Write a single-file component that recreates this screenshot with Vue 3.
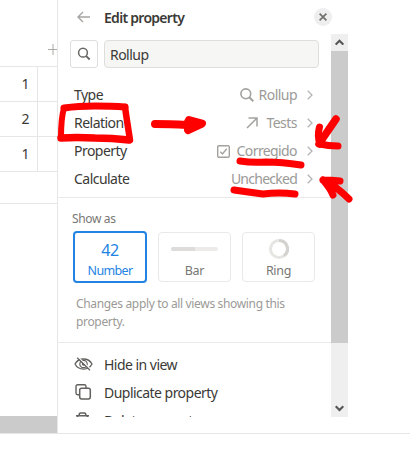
<script setup>
const cells = ['1', '2', '1']
const options = [
  { label: 'Type', value: 'Rollup', icon: 'search', cls: 'v-rollup' },
  { label: 'Relation', value: 'Tests', icon: 'arrow', cls: 'v-tests' },
  { label: 'Property', value: 'Corregido', icon: 'check', cls: 'v-corr' },
  { label: 'Calculate', value: 'Unchecked', icon: '', cls: 'v-unch' },
]
</script>

<template>
  <div class="page">
    <div class="main">
      <div class="table">
        <div class="thead">
          <svg width="9" height="11" viewBox="0 0 9 11"><path d="M0 5.5H9M5 0V11" stroke="#aaa9a6" stroke-width="1" fill="none" /></svg>
        </div>
        <div v-for="(c, i) in cells" :key="i" class="trow"><span class="cell">{{ c }}</span></div>
        <div class="tfoot"></div>
        <div class="hscroll"></div>
      </div>
      <div class="panel">
        <header class="head">
          <svg class="back" width="13" height="12" viewBox="0 0 13 12"><path d="M13 6H1M6 1L1 6L6 11" stroke="#a6a5a2" stroke-width="1.4" fill="none" /></svg>
          <span class="title">Edit property</span>
          <span class="close"><svg width="8" height="8" viewBox="0 0 8 8"><path d="M.6 .6L7.4 7.4M7.4 .6L.6 7.4" stroke="#71706d" stroke-width="1.7" /></svg></span>
        </header>
        <div class="body">
          <div class="content">
            <div class="namebar">
              <span class="iconbtn"><svg width="14" height="14" viewBox="0 0 14 14"><circle cx="6" cy="5.7" r="4.4" fill="none" stroke="#686763" stroke-width="1.5" /><path d="M9 8.9L12.7 12.5" stroke="#686763" stroke-width="1.9" /></svg></span>
              <span class="field">Rollup</span>
            </div>
            <div class="options">
              <div v-for="o in options" :key="o.label" class="opt">
                <span class="lab">{{ o.label }}</span>
                <svg v-if="o.icon === 'search'" class="oi s" width="14" height="14" viewBox="0 0 14 14"><circle cx="5.8" cy="5.8" r="4.9" fill="none" stroke="#a3a29f" stroke-width="1.6" /><path d="M9.2 9.2L13.3 13.2" stroke="#a3a29f" stroke-width="2" /></svg>
                <svg v-if="o.icon === 'arrow'" class="oi a" width="12" height="12" viewBox="0 0 12 12"><path d="M1 11L10.8 1.2M2.5 1H11V9.5" stroke="#a3a29f" stroke-width="1.5" fill="none" /></svg>
                <svg v-if="o.icon === 'check'" class="oi c" width="13" height="13" viewBox="0 0 13 13"><rect x=".7" y=".7" width="11.6" height="11.6" rx="1.2" stroke="#a3a29f" stroke-width="1.4" fill="none" /><path d="M3.3 6.7L5.5 8.9L9.7 3.8" stroke="#a3a29f" stroke-width="1.4" fill="none" /></svg>
                <span class="val" :class="o.cls">{{ o.value }}</span>
                <svg class="chev" width="6" height="10" viewBox="0 0 6 10"><path d="M.7 .7L5 5L.7 9.3" stroke="#b5b4b2" stroke-width="1.3" fill="none" /></svg>
              </div>
            </div>
            <div class="show">
              <div class="showlab">Show as</div>
              <div class="cards">
                <div class="card on"><span class="pic num">42</span><span class="cap">Number</span></div>
                <div class="card"><span class="pic"><span class="bar"><i></i></span></span><span class="cap">Bar</span></div>
                <div class="card">
                  <span class="pic"><svg width="20" height="20" viewBox="0 0 20 20"><circle cx="10" cy="10" r="8.5" fill="none" stroke="#e5e5e2" stroke-width="3" /><path d="M10 1.5A8.5 8.5 0 0 1 15 16.9" fill="none" stroke="#d3d2cf" stroke-width="3" /></svg></span>
                  <span class="cap">Ring</span>
                </div>
              </div>
              <p class="note">Changes apply to all views showing this<br />property.</p>
            </div>
            <div class="menu">
              <div class="item">
                <svg width="19" height="14" viewBox="0 0 19 14"><path d="M1 7C4.5 .3 14.5 .3 18 7C14.5 13.7 4.5 13.7 1 7Z" fill="none" stroke="#62615d" stroke-width="1.3" /><circle cx="9.5" cy="7" r="3.7" fill="none" stroke="#62615d" stroke-width="1.2" /><circle cx="9.5" cy="7" r="1.7" fill="#62615d" /><path d="M4.3 .5L17 12.8" stroke="#fff" stroke-width="1.4" /><path d="M3.2 .7L16 13.3" stroke="#62615d" stroke-width="1.2" /></svg>
                <span class="hide">Hide in view</span>
              </div>
              <div class="item">
                <svg width="19" height="16" viewBox="0 0 19 16"><path d="M5 10.8H3.7Q2 10.8 2 9.1V2.5Q2 .8 3.7 .8H10.3Q12 .8 12 2.5V4" fill="none" stroke="#62615d" stroke-width="1.4" /><rect x="5.7" y="4.3" width="10.6" height="10.6" rx="1.8" fill="none" stroke="#62615d" stroke-width="1.5" /></svg>
                <span class="dup">Duplicate property</span>
              </div>
              <div class="item">
                <svg width="19" height="16" viewBox="0 0 19 16"><path d="M2 3.7H15M5.2 3.5V2.5Q5.2 1 6.7 1H10.3Q11.8 1 11.8 2.5V3.5M3.5 3.7L4.3 14.5H12.7L13.5 3.7" fill="none" stroke="#62615d" stroke-width="1.6" /></svg>
                <span class="del">Delete property</span>
              </div>
            </div>
          </div>
          <div class="scroll">
            <span class="sbtn"><svg width="9" height="7" viewBox="0 0 9 7"><path d="M.7 5.6L4.5 1.8L8.3 5.6" fill="none" stroke="#555" stroke-width="2.1" /></svg></span>
            <span class="thumb"></span>
            <span class="sbtn low"><svg width="9" height="7" viewBox="0 0 9 7"><path d="M.7 1.2L4.5 5L8.3 1.2" fill="none" stroke="#555" stroke-width="2.1" /></svg></span>
          </div>
        </div>
      </div>
    </div>
    <svg class="marks" width="410" height="461" viewBox="0 0 410 461" fill="none" stroke="#f00" stroke-linecap="round" stroke-linejoin="round">
      <path d="M64 108Q78 106 95 106Q112 106 125 107" stroke-width="7" />
      <path d="M64 108Q61 118 61 138" stroke-width="6" />
      <path d="M125 107Q127 121 130 140" stroke-width="6.500" />
      <path d="M61 138Q76 137 95 138Q112 138 129 140" stroke-width="7.500" />
      <path d="M155 124Q169 124 187 125" stroke-width="8" />
      <path d="M189 120L202 123.5L188 130L188 122Z" fill="#f00" stroke-width="8" />
      <path d="M240 161Q252 163 266 162Q282 162 301 165" stroke-width="7" />
      <path d="M234 190Q248 192 263 194Q279 192 295 194" stroke-width="7" />
      <path d="M336 119Q327 132 319 144" stroke-width="7.500" />
      <path d="M319.500 127Q317 136 320 144Q328 146 338 146" stroke-width="7" />
      <path d="M349 199Q336 186 323 180M323 180Q332 180 340 181M323 180Q330 188 333 195" stroke-width="7" />
      <path d="M324 180H337L333 192Z" fill="#f00" stroke-width="3" />
    </svg>
  </div>
</template>

<style>
body { margin: 0; background: #fff; overflow: hidden; }
</style>

<style scoped>
* { box-sizing: border-box; }
svg { display: block; flex: none; }
.page { position: relative; width: 410px; height: 461px; overflow: hidden; background: #fff; color: #3b3a36; font: 14px/28px "Noto Sans", "Open Sans", sans-serif; letter-spacing: -.53px; }
.main { display: flex; height: 434px; border-bottom: 1px solid #e6e6e5; }
.table { width: 57px; display: flex; flex-direction: column; }
.thead { height: 67px; display: flex; justify-content: flex-end; padding: 44px 0 0; border-bottom: 1px solid #e6e6e5; }
.trow { height: 35px; border-bottom: 1px solid #e6e6e5; }
.cell { display: block; width: 38px; height: 34px; padding-right: 8px; border-right: 1px solid #e6e6e5; text-align: right; line-height: 33px; }
.tfoot { height: 32px; border-bottom: 1px solid #e6e6e5; }
.hscroll { height: 17px; margin-top: auto; background: #cbcbcb; }
.panel { width: 291px; border-left: 1px solid #e6e6e5; }
.head { height: 34px; display: flex; align-items: center; padding-left: 19px; }
.back { margin-right: 14px; }
.title { font-weight: 600; width: 100px; letter-spacing: -.72px; line-height: 34px; padding-top: 2px; }
.close { width: 18px; height: 18px; margin-left: 110px; border-radius: 9px; background: #eee; display: flex; align-items: center; justify-content: center; }
.body { height: 383px; display: flex; overflow: hidden; }
.content { width: 273px; }
.namebar { display: flex; gap: 6px; padding: 6px 0 0 12px; }
.iconbtn { width: 28px; height: 28px; border: 1px solid #dededd; border-radius: 3px; display: flex; align-items: center; justify-content: center; }
.field { width: 215px; height: 28px; border: 1px solid #dededd; border-radius: 4px; background: #f6f6f4; padding-left: 5px; line-height: 28px; }
.options { height: 130px; padding: 13px 18px 0 16px; border-bottom: 1px solid #e9e9e8; }
.opt { height: 28px; display: flex; align-items: center; }
.lab { margin-right: auto; }
.oi.s { margin-right: 5px; }
.oi.a { margin-right: 8px; }
.oi.c { margin-right: 7px; }
.val { color: #9b9a97; }
.v-unch { letter-spacing: -.75px; }
.v-corr { letter-spacing: -.6px; }
.chev { margin-left: 10px; }
.show { height: 145px; padding: 13px 0 0 14px; border-bottom: 1px solid #e9e9e8; }
.showlab { height: 20px; line-height: 16px; font-size: 12px; color: #787774; letter-spacing: -.35px; }
.cards { display: flex; align-items: center; gap: 11px; height: 52px; margin-left: 1px; }
.card { width: 73px; height: 50px; border: 1px solid #e9e9e8; border-radius: 4px; display: flex; flex-direction: column; align-items: center; font-size: 12.500px; color: #787774; letter-spacing: -.3px; }
.card.on { width: 74px; height: 52px; border: 2px solid #2383e2; color: #2383e2; letter-spacing: -.65px; }
.pic { height: 31px; display: flex; align-items: center; }
.pic.num { font-size: 16px; height: 33px; letter-spacing: -.3px; }
.card .cap { line-height: 13px; }
.card.on .cap { line-height: 10px; }
.bar { width: 47px; height: 4px; border-radius: 2px; background: #ecebe9; overflow: hidden; }
.bar i { display: block; width: 24px; height: 4px; background: #dddcda; }
.note { margin: 12px 0 0 4px; font-size: 12px; line-height: 18px; color: #9b9a97; letter-spacing: -.34px; }
.menu { padding: 7px 0 0 16px; }
.item { height: 28px; display: flex; align-items: center; }
.item span { margin-left: 11px; line-height: 29px; }
.scroll { width: 17px; display: flex; flex-direction: column; background: #efefef; }
.sbtn { height: 17px; display: flex; justify-content: center; align-items: center; }
.thumb { height: 292px; background: #cbcbcb; }
.low { margin-top: auto; }
.marks { position: absolute; left: 0; top: 0; }
</style>
